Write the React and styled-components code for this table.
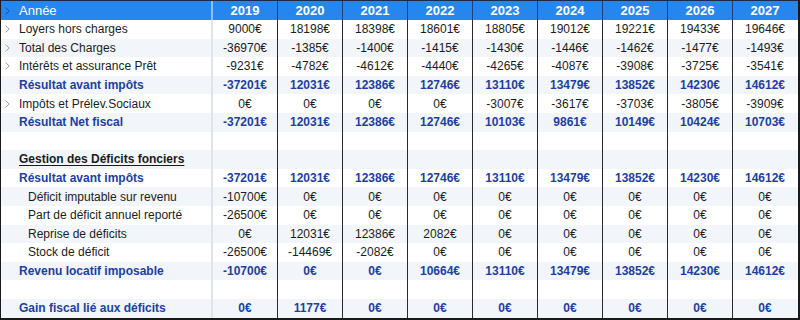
import styled, { createGlobalStyle } from 'styled-components';

const GlobalStyle = createGlobalStyle`
  html, body {
    margin: 0;
    padding: 0;
    background: #ffffff;
    overflow: hidden;
  }
  * {
    box-sizing: border-box;
  }
`;

const YEARS = [2019, 2020, 2021, 2022, 2023, 2024, 2025, 2026, 2027];

const ROWS = [
  { label: 'Loyers hors charges', chevron: true, values: [9000, 18198, 18398, 18601, 18805, 19012, 19221, 19433, 19646] },
  { label: 'Total des Charges', chevron: true, values: [-36970, -1385, -1400, -1415, -1430, -1446, -1462, -1477, -1493] },
  { label: 'Intérêts et assurance Prêt', chevron: true, values: [-9231, -4782, -4612, -4440, -4265, -4087, -3908, -3725, -3541] },
  { label: 'Résultat avant impôts', kind: 'total', values: [-37201, 12031, 12386, 12746, 13110, 13479, 13852, 14230, 14612] },
  { label: 'Impôts et Prélev.Sociaux', chevron: true, values: [0, 0, 0, 0, -3007, -3617, -3703, -3805, -3909] },
  { label: 'Résultat Net fiscal', kind: 'total', values: [-37201, 12031, 12386, 12746, 10103, 9861, 10149, 10424, 10703] },
  { label: '', values: null },
  { label: 'Gestion des Déficits fonciers', kind: 'section', values: null },
  { label: 'Résultat avant impôts', kind: 'total', values: [-37201, 12031, 12386, 12746, 13110, 13479, 13852, 14230, 14612] },
  { label: 'Déficit imputable sur revenu', kind: 'sub', values: [-10700, 0, 0, 0, 0, 0, 0, 0, 0] },
  { label: 'Part de déficit annuel reporté', kind: 'sub', values: [-26500, 0, 0, 0, 0, 0, 0, 0, 0] },
  { label: 'Reprise de déficits', kind: 'sub', values: [0, 12031, 12386, 2082, 0, 0, 0, 0, 0] },
  { label: 'Stock de déficit', kind: 'sub', values: [-26500, -14469, -2082, 0, 0, 0, 0, 0, 0] },
  { label: 'Revenu locatif imposable', kind: 'total', values: [-10700, 0, 0, 10664, 13110, 13479, 13852, 14230, 14612] },
  { label: '', values: null },
  { label: 'Gain fiscal lié aux déficits', kind: 'total', values: [0, 1177, 0, 0, 0, 0, 0, 0, 0] },
];

const Frame = styled.div`
  width: 800px;
  height: 320px;
  border-top: 1px solid #1b2a4a;
  border-left: 1px solid #1a1a1a;
  border-right: 2px solid #1a1a1a;
  border-bottom: 2px solid #1a1a1a;
  font-family: 'Liberation Sans', Arial, sans-serif;
  font-size: 12px;
  color: #1c1c1e;
  overflow: hidden;
`;

const Row = styled.div`
  display: grid;
  grid-template-columns: 212px repeat(9, 65px);
  height: ${(p) => (p.$header ? '19px' : '18.6px')};
  background: ${(p) => (p.$header ? '#2686ee' : p.$striped ? '#f2f5f9' : '#ffffff')};
  color: ${(p) => (p.$header ? '#ffffff' : '#1c1c1e')};
`;

const LabelCell = styled.div`
  display: flex;
  align-items: center;
  gap: 0;
  padding-left: ${(p) => (p.$indent ? '27px' : '4px')};
  border-right: 2px solid ${(p) => (p.$header ? '#8cc0f6' : '#dfe3ea')};
  white-space: nowrap;
  font-weight: ${(p) => (p.$bold ? 700 : 400)};
  color: ${(p) => p.$color || 'inherit'};
  text-decoration: ${(p) => (p.$underline ? 'underline' : 'none')};
  text-underline-offset: 2px;
`;

const ChevronSlot = styled.span`
  display: inline-flex;
  width: 14px;
  justify-content: flex-start;
  align-items: center;
`;

const ValueCell = styled.div`
  display: flex;
  align-items: center;
  justify-content: center;
  border-right: 1px solid ${(p) => (p.$last ? 'transparent' : p.$header ? '#1d3f7a' : '#2a2a2a')};
  font-weight: ${(p) => (p.$bold ? 700 : 400)};
  color: ${(p) => p.$color || 'inherit'};
  font-size: ${(p) => (p.$header ? '13px' : '12px')};
`;

const Chevron = ({ color }) => (
  <svg width="5" height="8" viewBox="0 0 5 8">
    <polyline points="0.6,0.6 4.2,4 0.6,7.4" fill="none" stroke={color} strokeWidth="1" />
  </svg>
);

const BLUE = '#1d3f9f';

const euro = (v) => `${v}€`;

const App = () => {
  return (
    <>
      <GlobalStyle />
      <Frame>
        <Row $header>
          <LabelCell $header>
            <ChevronSlot>
              <Chevron color="#1b4fa8" />
            </ChevronSlot>
            <span style={{ fontSize: 13 }}>Année</span>
          </LabelCell>
          {YEARS.map((y, i) => (
            <ValueCell key={y} $header $bold $last={i === YEARS.length - 1}>
              {y}
            </ValueCell>
          ))}
        </Row>
        {ROWS.map((r, idx) => {
          const bold = r.kind === 'total' || r.kind === 'section';
          const color = r.kind === 'total' ? BLUE : undefined;
          return (
            <Row key={idx} $striped={idx % 2 === 1}>
              <LabelCell
                $bold={bold}
                $color={color}
                $indent={r.kind === 'sub'}
                $underline={r.kind === 'section'}
              >
                {r.kind !== 'sub' && (
                  <ChevronSlot>{r.chevron && <Chevron color="#9a9ea6" />}</ChevronSlot>
                )}
                {r.label}
              </LabelCell>
              {YEARS.map((y, i) => (
                <ValueCell key={y} $bold={bold} $color={color} $last={i === YEARS.length - 1}>
                  {r.values ? euro(r.values[i]) : ''}
                </ValueCell>
              ))}
            </Row>
          );
        })}
      </Frame>
    </>
  );
};

export default App;
